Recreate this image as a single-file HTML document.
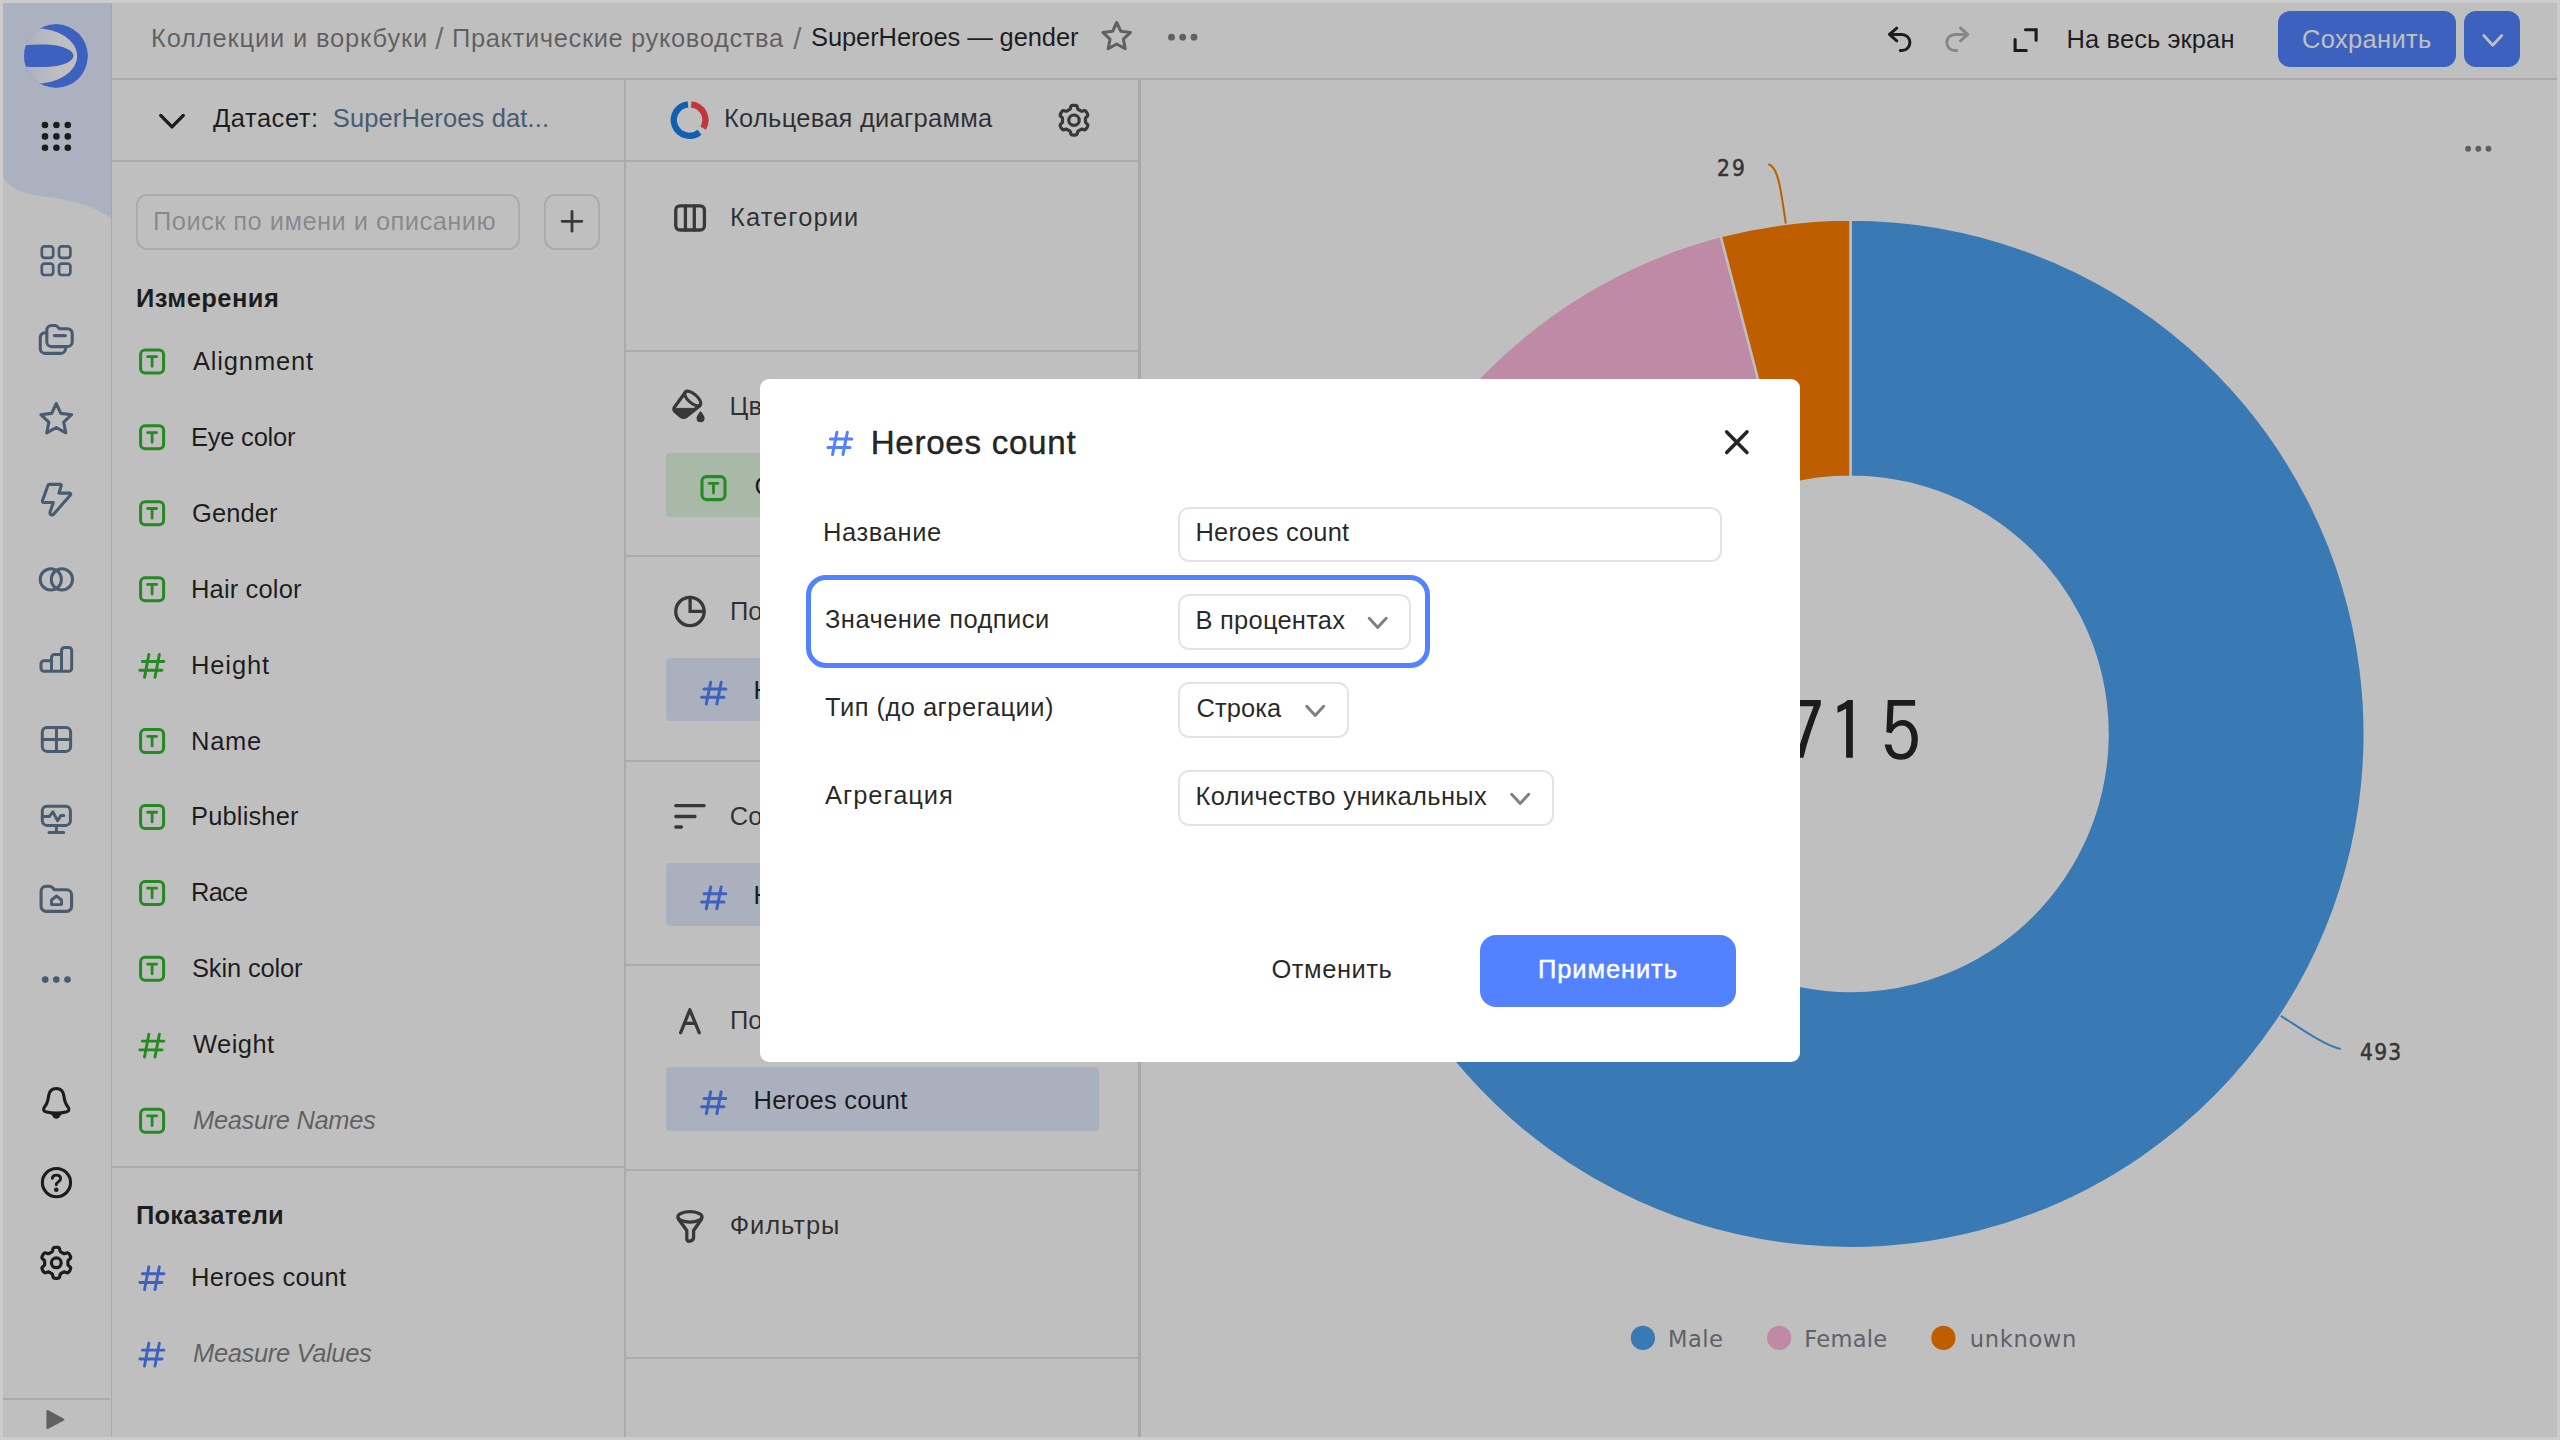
<!DOCTYPE html>
<html lang="ru"><head><meta charset="utf-8"><title>SuperHeroes — gender</title>
<style>
html,body{margin:0;padding:0;}
body{width:2560px;height:1440px;overflow:hidden;background:#fff;font-family:"Liberation Sans", Arial, sans-serif;position:relative;}
.t{position:absolute;white-space:nowrap;line-height:1;}
.b{position:absolute;box-sizing:border-box;display:block;}
#page,#modal,#dim,#frame{position:absolute;left:0;top:0;width:2560px;height:1440px;}
#dim{background:rgba(0,0,0,.25);}
#frame{box-sizing:border-box;border:3px solid #cccccc;}
svg.ic{position:absolute;left:0;top:0;fill:none;stroke-linecap:round;stroke-linejoin:round;}
</style></head><body>
<div id="page">
<svg class="b" style="left:0;top:0" width="112" height="240" viewBox="0 0 112 240">
<path d="M0 0H112V219C100 210 86 204.5 70 200.7C45 195 10 197 3 175L0 175Z" fill="#e4ecff"/>
<defs><clipPath id="lg"><circle cx="56" cy="56" r="32"/></clipPath>
<linearGradient id="lgg" gradientUnits="userSpaceOnUse" x1="28" y1="0" x2="57" y2="0"><stop offset="0" stop-color="#ffffff" stop-opacity="0"/><stop offset="1" stop-color="#ffffff" stop-opacity="1"/></linearGradient></defs>
<g clip-path="url(#lg)"><circle cx="56" cy="56" r="32" fill="#5282ff"/><ellipse cx="34.5" cy="56" rx="42.6" ry="27.8" fill="#e4ecff"/><ellipse cx="34.5" cy="56" rx="42.6" ry="27.8" fill="url(#lgg)"/><path d="M20 45.6C30 44.4 42 44.3 50 44.8C62 45.6 73.5 50 73.5 55.8C73.5 61.6 62 66 50 66.8C42 67.3 30 67.2 20 66Z" fill="#5282ff"/></g>
<g fill="#262626"><circle cx="45" cy="125" r="3.3"/><circle cx="56.4" cy="125" r="3.3"/><circle cx="67.8" cy="125" r="3.3"/><circle cx="45" cy="136.4" r="3.3"/><circle cx="56.4" cy="136.4" r="3.3"/><circle cx="67.8" cy="136.4" r="3.3"/><circle cx="45" cy="147.8" r="3.3"/><circle cx="56.4" cy="147.8" r="3.3"/><circle cx="67.8" cy="147.8" r="3.3"/></g></svg>
<div class="b" style="left:110.6px;top:219px;width:1.4px;height:1221px;background:rgba(0,0,0,.1);"></div>
<div class="b" style="left:111px;top:0px;width:1px;height:219px;background:rgba(0,0,0,.06);"></div>
<div class="b" style="left:0px;top:1398px;width:110px;height:2px;background:rgba(0,0,0,.1);"></div>
<div class="b" style="left:112px;top:78px;width:2448px;height:2px;background:rgba(0,0,0,.1);"></div>
<div class="t" style="left:151.00px;top:25.75px;font-size:25.5px;color:rgba(0,0,0,.5);letter-spacing:0.823px;">Коллекции и воркбуки</div>
<div class="t" style="left:435.20px;top:24.25px;font-size:29.5px;color:rgba(0,0,0,.45);">/</div>
<div class="t" style="left:452.00px;top:25.75px;font-size:25.5px;color:rgba(0,0,0,.5);letter-spacing:0.623px;">Практические руководства</div>
<div class="t" style="left:793.20px;top:24.25px;font-size:29.5px;color:rgba(0,0,0,.45);">/</div>
<div class="t" style="left:811.00px;top:24.75px;font-size:25.5px;color:rgba(0,0,0,.85);letter-spacing:-0.096px;">SuperHeroes — gender</div>
<div class="t" style="left:2066.60px;top:26.75px;font-size:25.5px;color:rgba(0,0,0,.85);letter-spacing:0.085px;">На весь экран</div>
<div class="b" style="left:2278px;top:11px;width:178px;height:56px;background:#5282ff;border-radius:12px;"></div>
<div class="t" style="left:2302.00px;top:26.75px;font-size:25.5px;color:#fff;letter-spacing:0.321px;">Сохранить</div>
<div class="b" style="left:2464px;top:11px;width:56px;height:56px;background:#5282ff;border-radius:12px;"></div>
<div class="b" style="left:624px;top:80px;width:2px;height:1360px;background:rgba(0,0,0,.1);"></div>
<div class="b" style="left:112px;top:160px;width:512px;height:2px;background:rgba(0,0,0,.1);"></div>
<div class="t" style="left:213.00px;top:105.75px;font-size:25.5px;color:rgba(0,0,0,.85);letter-spacing:0.539px;">Датасет:</div>
<div class="t" style="left:332.75px;top:105.75px;font-size:25.5px;color:#627a94;letter-spacing:0.135px;">SuperHeroes dat...</div>
<div class="b" style="left:136px;top:194px;width:384px;height:56px;border:2px solid rgba(0,0,0,.1);border-radius:11px;"></div>
<div class="t" style="left:153.00px;top:208.55px;font-size:25.5px;color:rgba(0,0,0,.3);letter-spacing:0.437px;">Поиск по имени и описанию</div>
<div class="b" style="left:544px;top:194px;width:56px;height:56px;border:2px solid rgba(0,0,0,.1);border-radius:11px;"></div>
<div class="t" style="left:136.00px;top:285.75px;font-size:25.5px;color:rgba(0,0,0,.85);font-weight:700;letter-spacing:0.469px;">Измерения</div>
<div class="t" style="left:193.00px;top:348.85px;font-size:25.5px;color:rgba(0,0,0,.85);letter-spacing:0.836px;">Alignment</div>
<div class="t" style="left:191.00px;top:424.78px;font-size:25.5px;color:rgba(0,0,0,.85);letter-spacing:-0.225px;">Eye color</div>
<div class="t" style="left:192.00px;top:500.71px;font-size:25.5px;color:rgba(0,0,0,.85);letter-spacing:0.088px;">Gender</div>
<div class="t" style="left:191.00px;top:576.64px;font-size:25.5px;color:rgba(0,0,0,.85);letter-spacing:0.154px;">Hair color</div>
<div class="t" style="left:191.00px;top:652.57px;font-size:25.5px;color:rgba(0,0,0,.85);letter-spacing:0.875px;">Height</div>
<div class="t" style="left:191.00px;top:728.50px;font-size:25.5px;color:rgba(0,0,0,.85);letter-spacing:0.720px;">Name</div>
<div class="t" style="left:191.00px;top:804.43px;font-size:25.5px;color:rgba(0,0,0,.85);letter-spacing:0.148px;">Publisher</div>
<div class="t" style="left:191.00px;top:880.36px;font-size:25.5px;color:rgba(0,0,0,.85);letter-spacing:-0.782px;">Race</div>
<div class="t" style="left:192.00px;top:956.29px;font-size:25.5px;color:rgba(0,0,0,.85);letter-spacing:-0.163px;">Skin color</div>
<div class="t" style="left:193.00px;top:1032.22px;font-size:25.5px;color:rgba(0,0,0,.85);letter-spacing:0.436px;">Weight</div>
<div class="t" style="left:193.00px;top:1108.15px;font-size:25.5px;color:rgba(0,0,0,.5);font-style:italic;letter-spacing:-0.360px;">Measure Names</div>
<div class="b" style="left:112px;top:1166px;width:512px;height:2px;background:rgba(0,0,0,.1);"></div>
<div class="t" style="left:136.00px;top:1202.75px;font-size:25.5px;color:rgba(0,0,0,.85);font-weight:700;letter-spacing:0.161px;">Показатели</div>
<div class="t" style="left:191.00px;top:1264.85px;font-size:25.5px;color:rgba(0,0,0,.85);letter-spacing:0.311px;">Heroes count</div>
<div class="t" style="left:193.00px;top:1341.25px;font-size:25.5px;color:rgba(0,0,0,.5);font-style:italic;letter-spacing:-0.351px;">Measure Values</div>
<div class="b" style="left:1138px;top:80px;width:3px;height:1360px;background:rgba(0,0,0,.12);"></div>
<div class="b" style="left:626px;top:160px;width:512px;height:2px;background:rgba(0,0,0,.1);"></div>
<div class="t" style="left:724.00px;top:105.75px;font-size:25.5px;color:rgba(0,0,0,.75);letter-spacing:0.249px;">Кольцевая диаграмма</div>
<div class="t" style="left:730.00px;top:204.95px;font-size:25.5px;color:rgba(0,0,0,.75);letter-spacing:1.075px;">Категории</div>
<div class="b" style="left:626px;top:350px;width:512px;height:2px;background:rgba(0,0,0,.1);"></div>
<div class="t" style="left:729.60px;top:394.10px;font-size:25.5px;color:rgba(0,0,0,.75);">Цвета</div>
<div class="b" style="left:666px;top:452.9px;width:433px;height:63.8px;background:rgba(59,201,53,.15);border-radius:4px;"></div>
<div class="t" style="left:754.60px;top:473.65px;font-size:25.5px;color:rgba(0,0,0,.85);">Gender</div>
<div class="b" style="left:626px;top:555px;width:512px;height:2px;background:rgba(0,0,0,.1);"></div>
<div class="t" style="left:730.00px;top:598.95px;font-size:25.5px;color:rgba(0,0,0,.75);">Показатели</div>
<div class="b" style="left:666px;top:657.7px;width:433px;height:63.8px;background:rgba(82,130,255,.155);border-radius:4px;"></div>
<div class="t" style="left:753.60px;top:678.45px;font-size:25.5px;color:rgba(0,0,0,.85);">Heroes count</div>
<div class="b" style="left:626px;top:760px;width:512px;height:2px;background:rgba(0,0,0,.1);"></div>
<div class="t" style="left:729.80px;top:804.10px;font-size:25.5px;color:rgba(0,0,0,.75);">Сортировка</div>
<div class="b" style="left:666px;top:862.5px;width:433px;height:63.8px;background:rgba(82,130,255,.155);border-radius:4px;"></div>
<div class="t" style="left:753.60px;top:883.25px;font-size:25.5px;color:rgba(0,0,0,.85);">Heroes count</div>
<div class="b" style="left:626px;top:964px;width:512px;height:2px;background:rgba(0,0,0,.1);"></div>
<div class="t" style="left:730.00px;top:1007.95px;font-size:25.5px;color:rgba(0,0,0,.75);">Подписи</div>
<div class="b" style="left:666px;top:1067.3px;width:433px;height:63.8px;background:rgba(82,130,255,.155);border-radius:4px;"></div>
<div class="t" style="left:753.60px;top:1088.05px;font-size:25.5px;color:rgba(0,0,0,.85);letter-spacing:0.188px;">Heroes count</div>
<div class="b" style="left:626px;top:1169px;width:512px;height:2px;background:rgba(0,0,0,.1);"></div>
<div class="t" style="left:729.80px;top:1212.95px;font-size:25.5px;color:rgba(0,0,0,.75);letter-spacing:0.923px;">Фильтры</div>
<div class="b" style="left:626px;top:1357px;width:512px;height:2px;background:rgba(0,0,0,.1);"></div>
<svg class="b" style="left:1140px;top:80px" width="1420" height="1360" viewBox="1140 80 1420 1360">
<path d="M1850.45 219.60A514.25 514.25 0 1 1 1372.90 924.63L1611.70 829.23A257.1 257.1 0 1 0 1850.45 476.75Z" fill="#4da2f1" stroke="#ffffff" stroke-width="2.4" stroke-linejoin="round"/><path d="M1372.90 924.63A514.25 514.25 0 0 1 1720.81 236.21L1785.64 485.05A257.1 257.1 0 0 0 1611.70 829.23Z" fill="#ffb9dd" stroke="#ffffff" stroke-width="2.4" stroke-linejoin="round"/><path d="M1720.81 236.21A514.25 514.25 0 0 1 1850.45 219.60L1850.45 476.75A257.1 257.1 0 0 0 1785.64 485.05Z" fill="#ff7e00" stroke="#ffffff" stroke-width="2.4" stroke-linejoin="round"/>
<path d="M1768.3 164.2C1778 166 1781 190 1785.8 223.7" fill="none" stroke="#ff7e00" stroke-width="2"/>
<path d="M2280.8 1015.8C2300 1028 2325 1046 2340.8 1049" fill="none" stroke="#4da2f1" stroke-width="2"/>
<text x="1783.8 1827.7 1880.6" y="761.5" font-family="IPAGothic,'Liberation Sans',sans-serif" font-size="82.3" fill="#262626">715</text>
<circle cx="1642.9" cy="1337.9" r="12.1" fill="#4da2f1"/><circle cx="1779.1" cy="1337.9" r="12.1" fill="#ffb9dd"/><circle cx="1943.4" cy="1337.9" r="12.1" fill="#ff7e00"/>
</svg>
<div class="t" style="left:1717.00px;top:157.00px;font-size:22.5px;color:#474747;letter-spacing:2.407px;font-family:'DejaVu Sans',Verdana,sans-serif;transform:scaleX(0.9);transform-origin:0 0;-webkit-text-stroke:0.5px #474747;">29</div>
<div class="t" style="left:2360.35px;top:1041.15px;font-size:22.5px;color:#474747;letter-spacing:1.435px;font-family:'DejaVu Sans',Verdana,sans-serif;transform:scaleX(0.9);transform-origin:0 0;-webkit-text-stroke:0.5px #474747;">493</div>
<div class="t" style="left:1668.00px;top:1328.20px;font-size:22.6px;color:#80838c;letter-spacing:0.461px;font-family:'DejaVu Sans',Verdana,sans-serif;">Male</div>
<div class="t" style="left:1804.25px;top:1328.20px;font-size:22.6px;color:#80838c;letter-spacing:0.242px;font-family:'DejaVu Sans',Verdana,sans-serif;">Female</div>
<div class="t" style="left:1969.75px;top:1328.20px;font-size:22.6px;color:#80838c;letter-spacing:0.651px;font-family:'DejaVu Sans',Verdana,sans-serif;">unknown</div>
<svg class="ic" width="2560" height="1440" viewBox="0 0 2560 1440"><rect x="41.8" y="246.4" width="11.4" height="11.4" rx="2.8" stroke="#627a94" stroke-width="2.7"/>
<rect x="59" y="246.4" width="11.4" height="11.4" rx="2.8" stroke="#627a94" stroke-width="2.7"/>
<rect x="41.8" y="263.6" width="11.4" height="11.4" rx="2.8" stroke="#627a94" stroke-width="2.7"/>
<rect x="59" y="263.6" width="11.4" height="11.4" rx="2.8" stroke="#627a94" stroke-width="2.7"/>
<path d="M51.5 325.5H55C57 325.5 58 327 59.5 328.75H67.5A4.7 4.7 0 0 1 72.2 333.45V341.9A4.7 4.7 0 0 1 67.5 346.6H51.5A4.7 4.7 0 0 1 46.8 341.9V330.2A4.7 4.7 0 0 1 51.5 325.5Z" stroke="#627a94" stroke-width="3.1" fill="none" />
<path d="M46.8 332.7H45A4.7 4.7 0 0 0 40.3 337.4V348.7A4.7 4.7 0 0 0 45 353.4H60.8A4.7 4.7 0 0 0 65.5 348.7V346.6" stroke="#627a94" stroke-width="3.1" fill="none" />
<path d="M54.4 335.6H65.4" stroke="#627a94" stroke-width="3.1" fill="none" />
<path d="M56.25 403.50L60.83 413.39L71.66 414.69L63.67 422.11L65.77 432.81L56.25 427.50L46.73 432.81L48.83 422.11L40.84 414.69L51.67 413.39Z" stroke="#627a94" stroke-width="3.1" fill="none" />
<path d="M49.6 484.4H60.2Q61.6 484.4 61.2 485.8L58.9 493.1H69.2Q71.8 493.3 70 495.4L54 513.8Q51.8 516 50.4 514.2Q49.7 513.1 50.2 511.6L53.3 502.5H44Q41.8 502.3 42.6 500.2L47.8 485.8Q48.3 484.4 49.6 484.4Z" stroke="#627a94" stroke-width="3.1" fill="none" />
<circle cx="50.8" cy="579.4" r="10.6" stroke="#627a94" stroke-width="3.0"/>
<circle cx="61.9" cy="579.4" r="10.6" stroke="#627a94" stroke-width="3.0"/>
<path d="M41 668.25V663.8a3 3 0 0 1 3-3H51.5V657.4a3 3 0 0 1 3-3H61.5V650.5a3 3 0 0 1 3-3H68.7a3 3 0 0 1 3 3V668.25a3 3 0 0 1-3 3H44a3 3 0 0 1-3-3ZM51.5 660.8V671.25M61.5 654.4V671.25" stroke="#627a94" stroke-width="3.0" fill="none" />
<rect x="42.3" y="727.5" width="28.3" height="23.9" rx="4.6" stroke="#627a94" stroke-width="3.0"/>
<path d="M56.46 727.5V751.4M42.3 739.4H70.6" stroke="#627a94" stroke-width="3.0" fill="none" />
<rect x="42.3" y="806.3" width="28.1" height="19.1" rx="4.6" stroke="#627a94" stroke-width="3.0"/>
<path d="M56.46 825.4V832.5M49 832.5H63.7M42.3 816.5H49.3L52.9 811.9L57.5 820.6L61 815.4H63.8" stroke="#627a94" stroke-width="3.0" fill="none" />
<path d="M46 886.3H49.5C52 886.3 52.8 888 54.6 889.8H66.6A5 5 0 0 1 71.6 894.8V906.4A5 5 0 0 1 66.6 911.4H46.1A5 5 0 0 1 41.1 906.4V891.3A5 5 0 0 1 46 886.3Z" stroke="#627a94" stroke-width="3.1" fill="none" />
<path d="M56.46 896L61.5 900V904.6H51.5V900Z" stroke="#627a94" stroke-width="2.9" fill="none" />
<circle cx="45.2" cy="979.6" r="3.3" fill="#627a94" stroke="none"/>
<circle cx="56.3" cy="979.6" r="3.3" fill="#627a94" stroke="none"/>
<circle cx="67.5" cy="979.6" r="3.3" fill="#627a94" stroke="none"/>
<path d="M56.25 1088.5C51.5 1088.5 49.2 1091.5 48.6 1096C48 1101 47 1104 44.5 1107C42.5 1109.5 43.5 1111.3 46.5 1112C52 1113.3 60.5 1113.3 66 1112C69 1111.3 70 1109.5 68 1107C65.5 1104 64.5 1101 63.9 1096C63.3 1091.5 61 1088.5 56.25 1088.5Z" stroke="#262626" stroke-width="3.1" fill="none" />
<path d="M51.8 1113.6Q56.3 1122.5 60.8 1113.6Z" fill="#262626" stroke="#262626" stroke-width="1.5"/>
<circle cx="56.46" cy="1182.6" r="14.1" stroke="#262626" stroke-width="3.1"/>
<path d="M52.3 1178.4C52.5 1176.3 54 1175.1 56.3 1175.1C58.8 1175.1 60.6 1176.5 60.6 1178.7C60.6 1181.6 56.3 1181.6 56.3 1184.7" stroke="#262626" stroke-width="2.9" fill="none" />
<circle cx="56.25" cy="1189.7" r="2.3" fill="#262626" stroke="none"/>
<path d="M56.30 1247.25L56.84 1247.26L57.38 1247.30L57.92 1247.37L58.45 1247.50L58.96 1247.73L59.40 1248.21L59.72 1249.10L59.90 1250.23L60.10 1251.11L60.37 1251.62L60.70 1251.91L61.05 1252.12L61.41 1252.32L61.77 1252.51L62.12 1252.71L62.47 1252.92L62.82 1253.13L63.17 1253.35L63.53 1253.54L63.95 1253.68L64.52 1253.67L65.38 1253.39L66.46 1252.99L67.38 1252.82L68.02 1252.97L68.48 1253.29L68.85 1253.68L69.18 1254.11L69.48 1254.56L69.77 1255.02L70.03 1255.50L70.27 1255.99L70.47 1256.49L70.63 1257.01L70.68 1257.57L70.48 1258.19L69.88 1258.91L68.99 1259.64L68.32 1260.25L68.02 1260.73L67.93 1261.17L67.92 1261.58L67.93 1261.99L67.95 1262.39L67.95 1262.80L67.95 1263.21L67.93 1263.61L67.92 1264.02L67.93 1264.43L68.02 1264.87L68.32 1265.35L68.99 1265.96L69.88 1266.69L70.48 1267.41L70.68 1268.03L70.63 1268.59L70.47 1269.11L70.27 1269.61L70.03 1270.10L69.77 1270.58L69.48 1271.04L69.18 1271.49L68.85 1271.92L68.48 1272.31L68.02 1272.63L67.38 1272.78L66.46 1272.61L65.38 1272.21L64.52 1271.93L63.95 1271.92L63.53 1272.06L63.17 1272.25L62.82 1272.47L62.47 1272.68L62.12 1272.89L61.77 1273.09L61.41 1273.28L61.05 1273.48L60.70 1273.69L60.37 1273.98L60.10 1274.49L59.90 1275.37L59.72 1276.50L59.40 1277.39L58.96 1277.87L58.45 1278.10L57.92 1278.23L57.38 1278.30L56.84 1278.34L56.30 1278.35L55.76 1278.34L55.22 1278.30L54.68 1278.23L54.15 1278.10L53.64 1277.87L53.20 1277.39L52.88 1276.50L52.70 1275.37L52.50 1274.49L52.23 1273.98L51.90 1273.69L51.55 1273.48L51.19 1273.28L50.83 1273.09L50.47 1272.89L50.13 1272.68L49.78 1272.47L49.43 1272.25L49.07 1272.06L48.65 1271.92L48.08 1271.93L47.22 1272.21L46.14 1272.61L45.22 1272.78L44.58 1272.63L44.12 1272.31L43.75 1271.92L43.42 1271.49L43.12 1271.04L42.83 1270.58L42.57 1270.10L42.33 1269.61L42.13 1269.11L41.97 1268.59L41.92 1268.03L42.12 1267.41L42.72 1266.69L43.61 1265.96L44.28 1265.35L44.58 1264.87L44.67 1264.43L44.68 1264.02L44.67 1263.61L44.65 1263.21L44.65 1262.80L44.65 1262.39L44.67 1261.99L44.68 1261.58L44.67 1261.17L44.58 1260.73L44.28 1260.25L43.61 1259.64L42.72 1258.91L42.12 1258.19L41.92 1257.57L41.97 1257.01L42.13 1256.49L42.33 1255.99L42.57 1255.50L42.83 1255.02L43.12 1254.56L43.42 1254.11L43.75 1253.68L44.12 1253.29L44.58 1252.97L45.22 1252.82L46.14 1252.99L47.22 1253.39L48.08 1253.67L48.65 1253.68L49.07 1253.54L49.43 1253.35L49.78 1253.13L50.13 1252.92L50.47 1252.71L50.83 1252.51L51.19 1252.32L51.55 1252.12L51.90 1251.91L52.23 1251.62L52.50 1251.11L52.70 1250.23L52.88 1249.10L53.20 1248.21L53.64 1247.73L54.15 1247.50L54.68 1247.37L55.22 1247.30L55.76 1247.26Z" stroke="#262626" stroke-width="3.2" fill="none" /><circle cx="56.3" cy="1262.8" r="4.9" stroke="#262626" stroke-width="3.2"/>
<path d="M47.4 1411V1428L63.4 1419.6Z" fill="#808080" stroke="#808080" stroke-width="2"/>
<path d="M1116.70 22.50L1120.81 31.34L1130.49 32.52L1123.36 39.16L1125.22 48.73L1116.70 44.00L1108.18 48.73L1110.04 39.16L1102.91 32.52L1112.59 31.34Z" stroke="#808080" stroke-width="3.0" fill="none" />
<circle cx="1171.5" cy="37.2" r="3.4" fill="#808080" stroke="none"/>
<circle cx="1182.7" cy="37.2" r="3.4" fill="#808080" stroke="none"/>
<circle cx="1194" cy="37.2" r="3.4" fill="#808080" stroke="none"/>
<path d="M1896.8 28.1L1889.4 34.4L1896.8 40.8M1890 34.4H1901.8A8.1 8.1 0 0 1 1901.8 50.6H1900.3" stroke="#262626" stroke-width="3.0" fill="none" />
<path d="M1960.5 28.1L1967.7 34.4L1960.5 40.8M1967 34.4H1954.9A8.1 8.1 0 0 0 1954.9 50.6H1956.5" stroke="#b3b3b3" stroke-width="3.0" fill="none" />
<path d="M2025.5 29.7H2036.1V40.2M2015.1 39.6V50.5H2026.3" stroke="#262626" stroke-width="3.1" fill="none" stroke-linejoin="miter"/>
<path d="M2483.8 35.5L2492.8 45.3L2501.8 35.5" stroke="#fff" stroke-width="2.8" fill="none" />
<path d="M160.7 115.4L172 126.9L183.3 115.4" stroke="#262626" stroke-width="3.3" fill="none" />
<path d="M572 211.4V231.2M562.1 221.3H581.9" stroke="#4d4d4d" stroke-width="2.8" fill="none" />
<rect x="140.6" y="349.90000000000003" width="23" height="23" rx="4.5" stroke="#30b82c" stroke-width="3.05"/><path d="M147.6 356.65000000000003H156.6M152.1 356.65000000000003V366.3" stroke="#30b82c" stroke-width="2.8" fill="none" />
<rect x="140.6" y="425.83000000000004" width="23" height="23" rx="4.5" stroke="#30b82c" stroke-width="3.05"/><path d="M147.6 432.58000000000004H156.6M152.1 432.58000000000004V442.23" stroke="#30b82c" stroke-width="2.8" fill="none" />
<rect x="140.6" y="501.76" width="23" height="23" rx="4.5" stroke="#30b82c" stroke-width="3.05"/><path d="M147.6 508.51H156.6M152.1 508.51V518.16" stroke="#30b82c" stroke-width="2.8" fill="none" />
<rect x="140.6" y="577.69" width="23" height="23" rx="4.5" stroke="#30b82c" stroke-width="3.05"/><path d="M147.6 584.44H156.6M152.1 584.44V594.09" stroke="#30b82c" stroke-width="2.8" fill="none" />
<path d="M148.87 654.52L144.51 677.37M159.34 654.52L154.98 677.37M142.34 661.49L163.90 661.49M139.85 670.26L162.03 670.26" stroke="#30b82c" stroke-width="2.9" fill="none" />
<rect x="140.6" y="729.55" width="23" height="23" rx="4.5" stroke="#30b82c" stroke-width="3.05"/><path d="M147.6 736.3H156.6M152.1 736.3V745.9499999999999" stroke="#30b82c" stroke-width="2.8" fill="none" />
<rect x="140.6" y="805.48" width="23" height="23" rx="4.5" stroke="#30b82c" stroke-width="3.05"/><path d="M147.6 812.23H156.6M152.1 812.23V821.88" stroke="#30b82c" stroke-width="2.8" fill="none" />
<rect x="140.6" y="881.41" width="23" height="23" rx="4.5" stroke="#30b82c" stroke-width="3.05"/><path d="M147.6 888.16H156.6M152.1 888.16V897.81" stroke="#30b82c" stroke-width="2.8" fill="none" />
<rect x="140.6" y="957.34" width="23" height="23" rx="4.5" stroke="#30b82c" stroke-width="3.05"/><path d="M147.6 964.09H156.6M152.1 964.09V973.74" stroke="#30b82c" stroke-width="2.8" fill="none" />
<path d="M148.87 1034.17L144.51 1057.02M159.34 1034.17L154.98 1057.02M142.34 1041.14L163.90 1041.14M139.85 1049.91L162.03 1049.91" stroke="#30b82c" stroke-width="2.9" fill="none" />
<rect x="140.6" y="1109.2" width="23" height="23" rx="4.5" stroke="#30b82c" stroke-width="3.05"/><path d="M147.6 1115.95H156.6M152.1 1115.95V1125.6000000000001" stroke="#30b82c" stroke-width="2.8" fill="none" />
<path d="M148.87 1266.80L144.51 1289.65M159.34 1266.80L154.98 1289.65M142.34 1273.77L163.90 1273.77M139.85 1282.54L162.03 1282.54" stroke="#5282ff" stroke-width="2.9" fill="none" />
<path d="M148.87 1343.20L144.51 1366.05M159.34 1343.20L154.98 1366.05M142.34 1350.17L163.90 1350.17M139.85 1358.94L162.03 1358.94" stroke="#5282ff" stroke-width="2.9" fill="none" />
<path d="M691.25 104.29A15.8 15.8 0 0 1 703.14 128.14" stroke="#ff4c50" stroke-width="6.3" fill="none" stroke-linecap="butt"/>
<path d="M699.54 132.28A15.8 15.8 0 1 1 687.95 104.29" stroke="#1780e7" stroke-width="6.3" fill="none" stroke-linecap="butt"/>
<path d="M1074.00 105.30L1074.52 105.31L1075.04 105.35L1075.55 105.41L1076.06 105.53L1076.55 105.74L1076.98 106.17L1077.30 106.95L1077.51 107.95L1077.73 108.73L1078.01 109.19L1078.34 109.46L1078.69 109.67L1079.05 109.85L1079.40 110.04L1079.75 110.24L1080.10 110.45L1080.44 110.66L1080.78 110.87L1081.13 111.07L1081.53 111.22L1082.07 111.24L1082.85 111.03L1083.82 110.71L1084.66 110.60L1085.25 110.76L1085.68 111.08L1086.03 111.46L1086.34 111.87L1086.63 112.31L1086.90 112.75L1087.15 113.21L1087.38 113.67L1087.58 114.15L1087.74 114.65L1087.80 115.18L1087.64 115.77L1087.13 116.44L1086.37 117.12L1085.79 117.69L1085.54 118.17L1085.47 118.59L1085.47 118.99L1085.48 119.40L1085.50 119.80L1085.50 120.20L1085.50 120.60L1085.48 121.00L1085.47 121.41L1085.47 121.81L1085.54 122.23L1085.79 122.71L1086.37 123.28L1087.13 123.96L1087.64 124.63L1087.80 125.22L1087.74 125.75L1087.58 126.25L1087.38 126.73L1087.15 127.19L1086.90 127.65L1086.63 128.09L1086.34 128.53L1086.03 128.94L1085.68 129.32L1085.25 129.64L1084.66 129.80L1083.82 129.69L1082.85 129.37L1082.07 129.16L1081.53 129.18L1081.13 129.33L1080.78 129.53L1080.44 129.74L1080.10 129.95L1079.75 130.16L1079.40 130.36L1079.05 130.55L1078.69 130.73L1078.34 130.94L1078.01 131.21L1077.73 131.67L1077.51 132.45L1077.30 133.45L1076.98 134.23L1076.55 134.66L1076.06 134.87L1075.55 134.99L1075.04 135.05L1074.52 135.09L1074.00 135.10L1073.48 135.09L1072.96 135.05L1072.45 134.99L1071.94 134.87L1071.45 134.66L1071.02 134.23L1070.70 133.45L1070.49 132.45L1070.27 131.67L1069.99 131.21L1069.66 130.94L1069.31 130.73L1068.95 130.55L1068.60 130.36L1068.25 130.16L1067.90 129.95L1067.56 129.74L1067.22 129.53L1066.87 129.33L1066.47 129.18L1065.93 129.16L1065.15 129.37L1064.18 129.69L1063.34 129.80L1062.75 129.64L1062.32 129.32L1061.97 128.94L1061.66 128.53L1061.37 128.09L1061.10 127.65L1060.85 127.19L1060.62 126.73L1060.42 126.25L1060.26 125.75L1060.20 125.22L1060.36 124.63L1060.87 123.96L1061.63 123.28L1062.21 122.71L1062.46 122.23L1062.53 121.81L1062.53 121.41L1062.52 121.00L1062.50 120.60L1062.50 120.20L1062.50 119.80L1062.52 119.40L1062.53 118.99L1062.53 118.59L1062.46 118.17L1062.21 117.69L1061.63 117.12L1060.87 116.44L1060.36 115.77L1060.20 115.18L1060.26 114.65L1060.42 114.15L1060.62 113.67L1060.85 113.21L1061.10 112.75L1061.37 112.31L1061.66 111.87L1061.97 111.46L1062.32 111.08L1062.75 110.76L1063.34 110.60L1064.18 110.71L1065.15 111.03L1065.93 111.24L1066.47 111.22L1066.87 111.07L1067.22 110.87L1067.56 110.66L1067.90 110.45L1068.25 110.24L1068.60 110.04L1068.95 109.85L1069.31 109.67L1069.66 109.46L1069.99 109.19L1070.27 108.73L1070.49 107.95L1070.70 106.95L1071.02 106.17L1071.45 105.74L1071.94 105.53L1072.45 105.41L1072.96 105.35L1073.48 105.31Z" stroke="#4b4b4b" stroke-width="3.2" fill="none" /><circle cx="1074" cy="120.2" r="5.2" stroke="#4b4b4b" stroke-width="3.2"/>
<rect x="675.75" y="205.8" width="28.65" height="24.2" rx="4.2" stroke="#4b4b4b" stroke-width="3.3"/>
<path d="M685.4 205.8V230M694.3 205.8V230" stroke="#4b4b4b" stroke-width="3.3" fill="none" />
<path d="M685.4 392.2L674.9 406.4Q672.8 409.4 675.2 411.8L681.2 416.6Q683.7 418.3 686.3 416.4L699.9 405.6" stroke="#4b4b4b" stroke-width="3.3" fill="none" />
<ellipse cx="692.7" cy="398.5" rx="9.9" ry="4.5" transform="rotate(41 692.7 398.5)" stroke="#4b4b4b" stroke-width="3.1"/>
<path d="M673.9 408.4H694L700 405.6L686.3 416.4Q683.7 418.3 681.2 416.6L675.2 411.8Q673.1 409.8 673.9 408.4Z" fill="#4b4b4b" stroke="#4b4b4b" stroke-width="1"/>
<path d="M700.55 411C702.8 414 704.6 416.3 704.6 418.3A4.05 4.05 0 0 1 696.5 418.3C696.5 416.3 698.3 414 700.55 411Z" fill="#4b4b4b" stroke="none"/>
<rect x="702.0" y="476.59999999999997" width="23" height="23" rx="4.5" stroke="#30b82c" stroke-width="3.05"/><path d="M709.0 483.34999999999997H718.0M713.5 483.34999999999997V492.99999999999994" stroke="#30b82c" stroke-width="2.8" fill="none" />
<circle cx="689.95" cy="611.5" r="14.2" stroke="#4b4b4b" stroke-width="3.3"/>
<path d="M690.1 597.5V611.3H704" stroke="#4b4b4b" stroke-width="3.3" fill="none" stroke-linejoin="miter"/>
<path d="M710.67 682.25L706.29 704.00M721.21 682.25L716.83 704.00M704.10 688.88L725.80 688.88M701.60 697.23L723.92 697.23" stroke="#5282ff" stroke-width="3.0" fill="none" />
<path d="M675.8 805.7H704.1M675.8 816.5H695M675.8 827H681.4" stroke="#4b4b4b" stroke-width="3.3" fill="none" />
<path d="M710.67 887.05L706.29 908.80M721.21 887.05L716.83 908.80M704.10 893.68L725.80 893.68M701.60 902.03L723.92 902.03" stroke="#5282ff" stroke-width="3.0" fill="none" />
<path d="M680.7 1032.7L689.85 1009.75L699.2 1032.7M684.6 1023.3H695.2" stroke="#4b4b4b" stroke-width="3.3" fill="none" />
<path d="M710.67 1091.85L706.29 1113.60M721.21 1091.85L716.83 1113.60M704.10 1098.48L725.80 1098.48M701.60 1106.83L723.92 1106.83" stroke="#5282ff" stroke-width="3.0" fill="none" />
<ellipse cx="689.95" cy="1216.9" rx="12.1" ry="5.2" stroke="#4b4b4b" stroke-width="3.3"/>
<path d="M678.4 1219L686.8 1230.5V1238.6Q686.8 1241.6 689.6 1241.2Q693.6 1240.4 693.6 1237.4V1230.5L701.6 1219" stroke="#4b4b4b" stroke-width="3.3" fill="none" />
<circle cx="2468.1" cy="148.8" r="2.95" fill="#7f7f7f" stroke="none"/>
<circle cx="2478.3" cy="148.8" r="2.95" fill="#7f7f7f" stroke="none"/>
<circle cx="2488.5" cy="148.8" r="2.95" fill="#7f7f7f" stroke="none"/></svg>
</div>
<div id="dim"></div>
<div id="modal">
<div class="b" style="left:760px;top:379px;width:1040px;height:683px;background:#fff;border-radius:9px;"></div>
<div class="t" style="left:870.70px;top:426.00px;font-size:33.2px;color:rgba(0,0,0,.85);letter-spacing:0.684px;-webkit-text-stroke:0.45px rgba(0,0,0,.85);">Heroes count</div>
<div class="t" style="left:823.00px;top:520.25px;font-size:25.5px;color:rgba(0,0,0,.85);letter-spacing:0.604px;">Название</div>
<div class="b" style="left:1178px;top:507px;width:544px;height:55px;border:2px solid rgba(0,0,0,.11);border-radius:11px;"></div>
<div class="t" style="left:1195.50px;top:520.25px;font-size:25.5px;color:rgba(0,0,0,.85);letter-spacing:0.174px;">Heroes count</div>
<div class="b" style="left:806.3px;top:575px;width:623.8px;height:93px;border:5px solid #5282ff;border-radius:20px;"></div>
<div class="t" style="left:825.00px;top:607.25px;font-size:25.5px;color:rgba(0,0,0,.85);letter-spacing:0.448px;">Значение подписи</div>
<div class="b" style="left:1178px;top:594px;width:233px;height:56px;border:2px solid rgba(0,0,0,.11);border-radius:11px;"></div>
<div class="t" style="left:1195.50px;top:608.05px;font-size:25.5px;color:rgba(0,0,0,.85);letter-spacing:0.228px;">В процентах</div>
<div class="t" style="left:825.00px;top:695.25px;font-size:25.5px;color:rgba(0,0,0,.85);letter-spacing:0.465px;">Тип (до агрегации)</div>
<div class="b" style="left:1178px;top:682px;width:171px;height:56px;border:2px solid rgba(0,0,0,.11);border-radius:11px;"></div>
<div class="t" style="left:1196.50px;top:696.05px;font-size:25.5px;color:rgba(0,0,0,.85);letter-spacing:0.065px;">Строка</div>
<div class="t" style="left:825.00px;top:783.25px;font-size:25.5px;color:rgba(0,0,0,.85);letter-spacing:0.944px;">Агрегация</div>
<div class="b" style="left:1178px;top:770px;width:376px;height:56px;border:2px solid rgba(0,0,0,.11);border-radius:11px;"></div>
<div class="t" style="left:1195.50px;top:784.05px;font-size:25.5px;color:rgba(0,0,0,.85);letter-spacing:0.346px;">Количество уникальных</div>
<div class="t" style="left:1271.50px;top:957.00px;font-size:25.5px;color:rgba(0,0,0,.85);letter-spacing:0.538px;">Отменить</div>
<div class="b" style="left:1480px;top:935px;width:256px;height:72px;background:#5282ff;border-radius:16px;"></div>
<div class="t" style="left:1538.00px;top:957.00px;font-size:25.5px;color:#fff;letter-spacing:0.903px;-webkit-text-stroke:0.45px #fff;">Применить</div>
<svg class="ic" width="2560" height="1440" viewBox="0 0 2560 1440"><path d="M836.88 432.25L832.55 454.50M847.31 432.25L842.97 454.50M830.38 439.03L851.85 439.03M827.90 447.57L849.99 447.57" stroke="#5282ff" stroke-width="3.0" fill="none" />
<path d="M1726.7 431.9L1746.9 452.5M1746.9 431.9L1726.7 452.5" stroke="#262626" stroke-width="3.6" fill="none" />
<path d="M1369.2 618.3000000000001L1377.7 627.4L1386.2 618.3000000000001" stroke="#808080" stroke-width="3.0" fill="none" />
<path d="M1306.7 706.3000000000001L1315.2 715.4L1323.7 706.3000000000001" stroke="#808080" stroke-width="3.0" fill="none" />
<path d="M1511.7 794.3000000000001L1520.2 803.4L1528.7 794.3000000000001" stroke="#808080" stroke-width="3.0" fill="none" /></svg>
</div>
<div id="frame"></div>
</body></html>
